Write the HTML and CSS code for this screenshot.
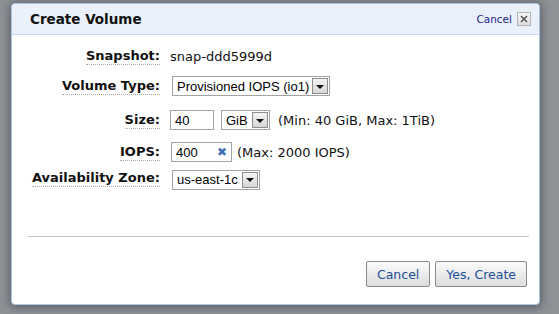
FILE: index.html
```html
<!DOCTYPE html>
<html lang="en">
<head>
    <meta charset="UTF-8">
    <title>Create Volume</title>
    <link rel="stylesheet" href="styles.css">
</head>
<body>
    <div class="dialog">
        <div class="dialog-header">
            <h2 class="dialog-title">Create Volume</h2>
            <a class="header-cancel" href="#">Cancel</a>
            <span class="close-btn">
                <svg width="8" height="8" viewBox="0 0 8 8"><path d="M1 1L7 7M7 1L1 7" stroke="#555" stroke-width="1.6"/></svg>
            </span>
        </div>

        <div class="form">
            <div class="label"><span>Snapshot:</span></div>
            <div class="value">snap-ddd5999d</div>

            <div class="label"><span>Volume Type:</span></div>
            <div class="value">
                <div class="select select-type">
                    <span class="select-text">Provisioned IOPS (io1)</span>
                    <span class="select-arrow"></span>
                </div>
            </div>

            <div class="label"><span>Size:</span></div>
            <div class="value">
                <div class="input input-size">40</div>
                <div class="select select-unit">
                    <span class="select-text">GiB</span>
                    <span class="select-arrow"></span>
                </div>
                <span class="hint">(Min: 40 GiB, Max: 1TiB)</span>
            </div>

            <div class="label"><span>IOPS:</span></div>
            <div class="value">
                <div class="input input-iops">400<span class="clear">&#x2716;</span></div>
                <span class="hint hint-iops">(Max: 2000 IOPS)</span>
            </div>

            <div class="label"><span>Availability Zone:</span></div>
            <div class="value">
                <div class="select select-zone">
                    <span class="select-text">us-east-1c</span>
                    <span class="select-arrow"></span>
                </div>
            </div>
        </div>

        <div class="footer">
            <div class="separator"></div>
            <div class="buttons">
                <button class="btn">Cancel</button>
                <button class="btn">Yes, Create</button>
            </div>
        </div>
    </div>
</body>
</html>
```

FILE: styles.css
```css
body {
    margin: 0;
    height: 314px;
    background: #8e9297;
    font-family: "DejaVu Sans", Verdana, sans-serif;
    font-size: 13px;
    color: #111;
    overflow: hidden;
}
.dialog {
    box-sizing: border-box;
    width: 529px;
    height: 302px;
    margin: 3px 0 0 11px;
    background: #fff;
    border: 1px solid #a9c6e6;
    border-radius: 4px;
    box-shadow: 0 1px 9px 2px rgba(40, 44, 50, 0.45);
    display: flex;
    flex-direction: column;
}
.dialog-header {
    height: 30px;
    background: #eaf1fb;
    border-bottom: 1px solid #c6dbf1;
    border-radius: 3px 3px 0 0;
    display: flex;
    align-items: center;
    padding: 0 8px 0 18px;
}
.dialog-title {
    flex: 1;
    margin: 0;
    font-size: 13.5px;
    font-weight: bold;
    color: #111;
}
.header-cancel {
    font-size: 10.5px;
    color: #24238c;
    text-decoration: none;
    margin-right: 5px;
}
.close-btn {
    box-sizing: border-box;
    width: 14px;
    height: 14px;
    border: 1px solid #b4b4b4;
    background: linear-gradient(#f7f7f7, #dedede);
    display: flex;
    align-items: center;
    justify-content: center;
}
.form {
    display: grid;
    grid-template-columns: 148px 1fr;
    grid-template-rows: 30px 30px 38px 26px 26px;
    column-gap: 10px;
    padding-top: 6px;
}
.label {
    text-align: right;
    font-weight: bold;
    display: flex;
    align-items: center;
    justify-content: flex-end;
}
.label span {
    border-bottom: 1px dotted #aaa;
    line-height: 16px;
    white-space: nowrap;
}
.value {
    display: flex;
    align-items: center;
    white-space: nowrap;
}
.select {
    box-sizing: border-box;
    height: 20px;
    border: 1px solid #a3a3a3;
    display: flex;
    align-items: center;
    padding: 0 1px 0 4px;
    font-family: "Liberation Sans", Arial, sans-serif;
    font-size: 13px;
    color: #000;
    background: #fff;
    white-space: nowrap;
}
.select-text {
    flex: 1;
}
.select-arrow {
    box-sizing: border-box;
    flex: none;
    width: 16px;
    height: 16px;
    border: 1px solid #8d8d8d;
    background: linear-gradient(#f4f4f4, #d6d6d6);
    margin-left: 2px;
    display: flex;
    align-items: center;
    justify-content: center;
}
.select-arrow::after {
    content: "";
    border-left: 4px solid transparent;
    border-right: 4px solid transparent;
    border-top: 4px solid #111;
    margin-top: 1px;
}
.select-type {
    width: 158px;
    margin-left: 2px;
}
.select-unit {
    width: 49px;
    margin-left: 7px;
}
.select-zone {
    width: 88px;
    margin-left: 2px;
    margin-top: 3px;
}
.input {
    box-sizing: border-box;
    height: 20px;
    border: 1px solid #a3a3a3;
    display: flex;
    align-items: center;
    padding: 0 4px;
    font-family: "Liberation Sans", Arial, sans-serif;
    font-size: 13px;
    color: #000;
}
.input-size {
    width: 44px;
}
.input-iops {
    width: 61px;
    margin-left: 1px;
    justify-content: space-between;
    padding-right: 4px;
}
.clear {
    color: #3d6eb4;
    font-size: 12px;
    font-family: "DejaVu Sans", sans-serif;
}
.hint {
    margin-left: 8px;
}
.hint-iops {
    margin-left: 5px;
}
.footer {
    margin-top: auto;
    padding-bottom: 17px;
}
.separator {
    height: 1px;
    background: #c3c3c3;
    margin: 0 10px 0 16px;
}
.buttons {
    display: flex;
    justify-content: flex-end;
    gap: 5px;
    padding: 24px 12px 0 0;
}
.btn {
    box-sizing: border-box;
    height: 26px;
    border: 1px solid #8a8a8a;
    border-radius: 2px;
    background: linear-gradient(#fbfbfb, #dcdcdc);
    font-family: "DejaVu Sans", Verdana, sans-serif;
    font-size: 12.5px;
    color: #204f98;
    padding: 0 10px;
}
```
